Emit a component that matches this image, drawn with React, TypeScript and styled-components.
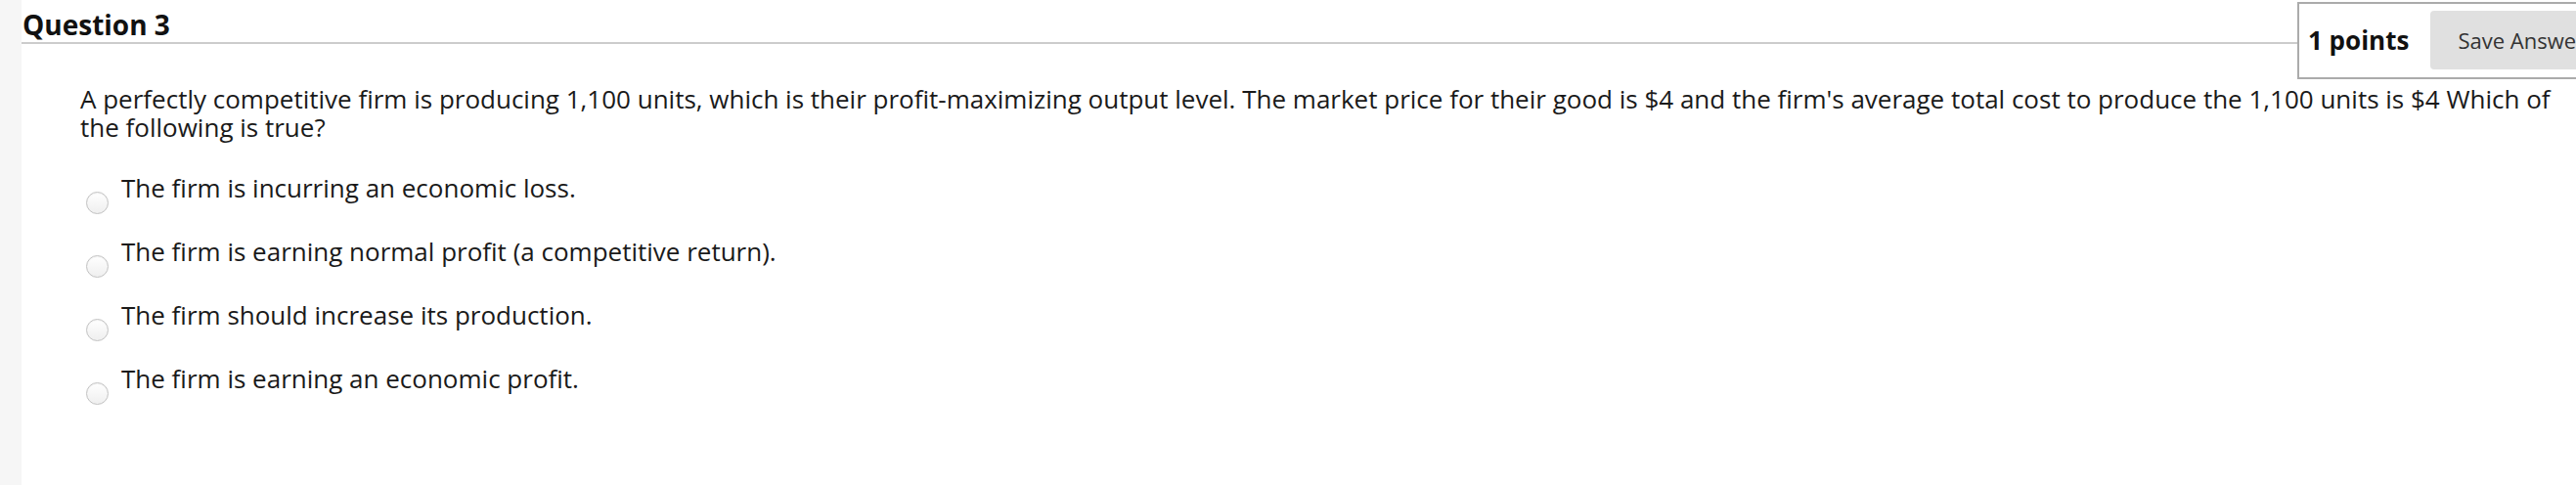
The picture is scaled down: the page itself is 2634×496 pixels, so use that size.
import styled, { createGlobalStyle } from "styled-components";

const GlobalStyle = createGlobalStyle`
	html, body {
		margin: 0;
		padding: 0;
		background: #fff;
		overflow: hidden;
	}
	body {
		font-family: "Open Sans", "Noto Sans", Arial, sans-serif;
		color: #1a1a1a;
	}
`;

const options = [
	"The firm is incurring an economic loss.",
	"The firm is earning normal profit (a competitive return).",
	"The firm should increase its production.",
	"The firm is earning an economic profit.",
];

export default function App() {
	return (
		<>
			<GlobalStyle />
			<Page>
				<Gutter />
				<Main>
					<Header>
						<Title>Question 3</Title>
						<PointsBox>
							<Points>1 points</Points>
							<SaveButton>Save Answer</SaveButton>
						</PointsBox>
					</Header>

					<Prompt>
						A perfectly competitive firm is producing 1,100 units, which is their
						profit-maximizing output level. The market price for their good is $4
						and the firm's average total cost to produce the 1,100 units is $4
						Which of the following is true?
					</Prompt>

					<Choices>
						{options.map((text) => (
							<Choice key={text}>
								<Radio />
								<ChoiceText>{text}</ChoiceText>
							</Choice>
						))}
					</Choices>
				</Main>
			</Page>
		</>
	);
}

const Page = styled.div`
	display: flex;
	width: 100vw;
	height: 100vh;
	overflow: hidden;
`;

const Gutter = styled.div`
	width: 22px;
	flex-shrink: 0;
	background: #f6f6f6;
`;

const Main = styled.main`
	flex: 1;
	min-width: 0;
	background: #fff;
`;

const Header = styled.div`
	display: flex;
	align-items: flex-start;
`;

const Title = styled.h2`
	flex: 1;
	margin: 0;
	padding: 9px 0 2px 1px;
	font-size: 28px;
	line-height: 32px;
	font-weight: 700;
	color: #111;
	border-bottom: 2px solid #cccccc;
`;

const PointsBox = styled.div`
	margin-top: 2px;
	display: flex;
	align-items: center;
	gap: 22px;
	padding: 7px 0 8px 9px;
	border: 2px solid #ababab;
	border-right: none;
	background: #fff;
	white-space: nowrap;
	flex-shrink: 0;
	width: 274px;
	overflow: hidden;
`;

const Points = styled.span`
	font-size: 26px;
	font-weight: 700;
	color: #111;
`;

const SaveButton = styled.button`
	flex-shrink: 0;
	height: 60px;
	padding: 0 28px;
	border: none;
	border-radius: 4px;
	background: #e0e0e0;
	color: #333;
	font-family: inherit;
	font-size: 22px;
	white-space: nowrap;
`;

const Prompt = styled.p`
	margin: 6px 4px 0 60px;
	font-size: 26px;
	line-height: 29px;
`;

const Choices = styled.div`
	margin: 33px 0 0 66px;
	display: flex;
	flex-direction: column;
	gap: 24px;
`;

const Choice = styled.label`
	display: flex;
	align-items: flex-start;
	gap: 13px;
`;

const Radio = styled.span`
	margin-top: 18px;
	width: 21px;
	height: 21px;
	flex-shrink: 0;
	border-radius: 50%;
	border: 1px solid #c2c2c2;
	background: linear-gradient(#ffffff, #efefef);
	box-shadow: inset 0 1px 1px rgba(0, 0, 0, 0.05);
`;

const ChoiceText = styled.span`
	font-size: 26px;
	line-height: 29px;
`;
